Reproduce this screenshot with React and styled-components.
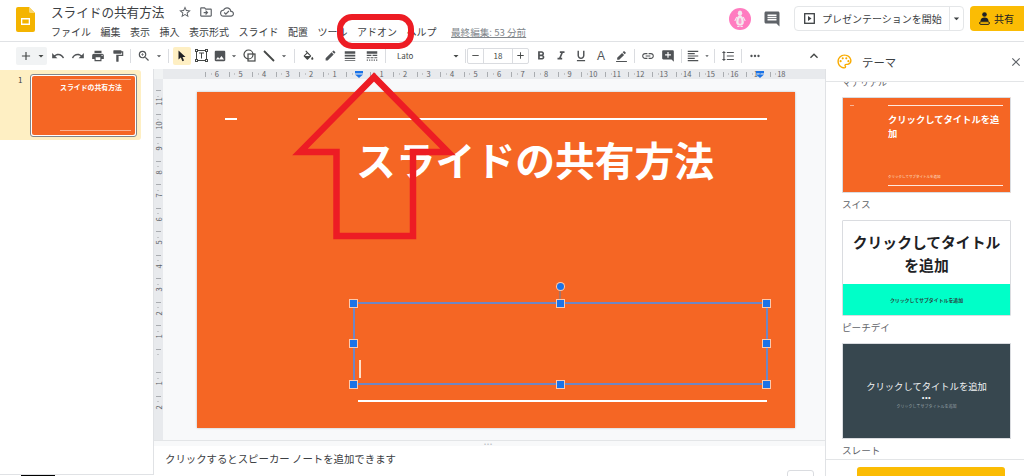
import React from 'react';
import styled, { createGlobalStyle } from 'styled-components';
import {
  MdAdd, MdArrowDropDown, MdUndo, MdRedo, MdPrint, MdFormatPaint, MdZoomIn, MdImage,
  MdCreate, MdLineWeight, MdLineStyle, MdRemove, MdFormatBold, MdFormatItalic,
  MdFormatUnderlined, MdBorderColor, MdLink, MdAddComment, MdFormatAlignLeft,
  MdFormatLineSpacing, MdMoreHoriz, MdExpandLess, MdClose, MdStarBorder, MdOutlineDriveFileMove,
  MdOutlineCloudDone, MdComment, MdOutlinePalette,
} from 'react-icons/md';

const Global = createGlobalStyle`
  html, body { margin: 0; padding: 0; background: #fff; overflow: hidden; }
  body { font-family: "Noto Sans CJK JP", "Noto Sans", sans-serif; color: #3c4043; }
  * { box-sizing: border-box; }
`;

const Page = styled.div`
  position: relative;
  width: 1024px;
  height: 476px;
  overflow: hidden;
  display: flex;
  flex-direction: column;
`;

/* header */
const Header = styled.header`
  height: 42px;
  flex: none;
  display: flex;
  align-items: flex-start;
  padding: 7px 0 0 16px;
  border-bottom: 1px solid #e0e2e5;
`;
const Logo = styled.svg`
  width: 19px;
  height: 25px;
  flex: none;
`;
const TitleBlock = styled.div`
  margin: -5px 0 0 16px;
  display: flex;
  flex-direction: column;
  flex: 1;
`;
const TitleRow = styled.div`
  display: flex;
  align-items: center;
  height: 19px;
  gap: 7px;
  color: #5f6368;
`;
const DocTitle = styled.span`
  font-size: 12.6px;
  color: #3c4043;
  margin-right: 7px;
  white-space: nowrap;
`;
const MenuRow = styled.nav`
  display: flex;
  align-items: center;
  gap: 9.5px;
  height: 19px;
  margin-top: 1px;
`;
const MenuItem = styled.span`
  font-size: 10px;
  color: #3c4043;
  white-space: nowrap;
`;
const LastEdit = styled.span`
  font-size: 9.6px;
  color: #80868b;
  text-decoration: underline;
  margin-left: 5px;
  white-space: nowrap;
`;
const HeaderRight = styled.div`
  display: flex;
  align-items: center;
  height: 25px;
  margin-top: -1px;
`;
const Avatar = styled.div`
  width: 22px;
  height: 22px;
  border-radius: 50%;
  background: #ff7cc0;
  display: flex;
  align-items: center;
  justify-content: center;
  margin-right: 12px;
`;
const CommentIcon = styled(MdComment)`
  font-size: 18px;
  color: #5f6368;
  margin-right: 13px;
`;
const PresentButton = styled.div`
  width: 170px;
  height: 25px;
  border: 1px solid #e4e6e8;
  border-radius: 4px;
  display: flex;
  align-items: center;
  font-size: 10px;
  color: #3c4043;
  margin-right: 6px;
`;
const PresentLabel = styled.div`
  flex: 1;
  height: 100%;
  display: flex;
  align-items: center;
  gap: 7px;
  padding-left: 9px;
  border-right: 1px solid #e4e6e8;
  white-space: nowrap;
`;
const PresentCaret = styled.div`
  width: 13px;
  display: flex;
  justify-content: center;
  color: #3c4043;
  font-size: 13px;
`;
const ShareButton = styled.div`
  width: 54px;
  height: 25px;
  background: #fbbc04;
  border-radius: 4px 0 0 4px;
  display: flex;
  align-items: center;
  gap: 4px;
  padding-left: 9px;
  font-size: 10px;
  color: #202124;
`;

/* toolbar */
const Toolbar = styled.div`
  height: 27px;
  flex: none;
  display: flex;
  align-items: center;
  padding-left: 16px;
  color: #444746;
`;
const Tool = styled.div`
  width: ${(p) => p.$w || 20}px;
  height: 18px;
  flex: none;
  display: flex;
  align-items: center;
  justify-content: center;
  font-size: ${(p) => p.$s || 14}px;
  background: ${(p) => p.$bg || 'transparent'};
  border-radius: 2px;
  color: #505356;
`;
const TextColorA = styled(Tool)`
  font-family: "Liberation Sans", sans-serif;
  font-size: 12px;
  line-height: 18px;
`;
const AddGroup = styled.div`
  width: 31px;
  height: 18px;
  display: flex;
  align-items: center;
  background: #f1f3f4;
  border-radius: 2px;
  padding-left: 3px;
  margin-right: 1px;
  font-size: 14px;
`;
const Sep = styled.div`
  width: 1px;
  height: 14px;
  flex: none;
  background: #dadce0;
  margin: 0 ${(p) => p.$r ?? 3}px 0 ${(p) => p.$l ?? 3}px;
`;
const FontName = styled.div`
  width: 72px;
  flex: none;
  display: flex;
  align-items: center;
  justify-content: space-between;
  font-size: 8px;
  padding-left: 7px;
  color: #444746;
`;
const SizeBox = styled.div`
  display: flex;
  height: 16px;
  border: 1px solid #dadce0;
  border-radius: 2px;
  margin-right: 2px;
`;
const SizeBtn = styled.div`
  width: 15px;
  display: flex;
  align-items: center;
  justify-content: center;
  font-size: 11px;
`;
const SizeVal = styled.div`
  width: 30px;
  display: flex;
  align-items: center;
  justify-content: center;
  font-size: 8px;
  border-left: 1px solid #dadce0;
  border-right: 1px solid #dadce0;
`;
const Push = styled.div`
  margin-left: auto;
  margin-right: 202px;
  font-size: 16px;
  display: flex;
  color: #444746;
`;

/* body */
const Body = styled.div`
  flex: 1;
  min-height: 0;
  display: flex;
`;
const FilmStrip = styled.aside`
  width: 154px;
  flex: none;
  border-right: 1px solid #e0e2e5;
  border-bottom: 1px solid #e0e2e5;
  height: 406px;
  padding-top: 1px;
`;
const FilmRow = styled.div`
  width: 141px;
  height: 70px;
  background: #feefc3;
  border-radius: 0 3px 3px 0;
  display: flex;
  padding: 4px 0 0 18px;
`;
const FilmNum = styled.span`
  font-size: 8px;
  width: 12px;
  color: #3c4043;
  line-height: 11px;
`;
const Thumb = styled.div`
  width: 107px;
  height: 63px;
  border: 1px solid #80868b;
  border-radius: 3px;
  background: #fff;
  padding: 1px;
`;
const ThumbInner = styled.div`
  height: 100%;
  background: #f56624;
  border-radius: 2px;
  position: relative;
  display: flex;
  flex-direction: column;
  padding: 3px 4px 4px 28px;
  justify-content: space-between;
`;
const ThumbLine = styled.div`
  height: 1px;
  background: #fbb08f;
`;
const ThumbTitle = styled.div`
  font-size: 6.9px;
  line-height: 9px;
  font-weight: 700;
  color: #fff;
  white-space: nowrap;
  margin-bottom: auto;
  margin-top: 3px;
`;

const Center = styled.main`
  flex: 1;
  min-width: 0;
  display: flex;
  flex-direction: column;
  border-right: 1px solid #e0e2e5;
`;
const HRulerRow = styled.div`
  height: 10px;
  flex: none;
  display: flex;
`;
const Corner = styled.div`
  width: 9px;
  background: #f1f3f4;
`;
const HRuler = styled.div`
  flex: 1;
  position: relative;
  background: #e8eaed;
  display: flex;
  padding-left: 42.2px;
`;
const ticks = `
  background-image:
    linear-gradient(#a9acb0, #a9acb0),
    linear-gradient(#c4c6c9, #c4c6c9);
  background-repeat: no-repeat;
`;
const HCell = styled.div`
  width: 23.53px;
  flex: none;
  font-size: 7.5px;
  line-height: 10px;
  text-align: center;
  color: #5f6368;
  ${ticks}
  background-size: 1px 5px, 1px 2px;
  background-position: 0 3px, 25% 4px;
`;
const RulerMarker = styled.svg`
  position: absolute;
  top: 2px;
  width: 8px;
  height: 7px;
  left: ${(p) => p.$x}px;
`;
const Work = styled.div`
  flex: 1;
  min-height: 0;
  display: flex;
  background: #f8f9fa;
`;
const VRuler = styled.div`
  width: 9px;
  flex: none;
  background: #e8eaed;
  padding-top: 11px;
`;
const VCell = styled.div`
  height: 23.53px;
  font-size: 7.5px;
  color: #5f6368;
  display: flex;
  align-items: center;
  justify-content: center;
  ${ticks}
  background-size: 5px 1px, 2px 1px;
  background-position: 2px 0, 3px 25%;
`;
const VLabel = styled.span`
  transform: rotate(-90deg);
  line-height: 9px;
`;
const SlideArea = styled.div`
  flex: 1;
  padding: 13px 0 0 34px;
`;
const Slide = styled.div`
  position: relative;
  width: 598px;
  height: 336px;
  background: #f56624;
  box-shadow: 0 0 2px #b9bbbe;
`;
const SlideLine = styled.div`
  position: absolute;
  left: ${(p) => p.$x}px;
  top: ${(p) => p.$y}px;
  width: ${(p) => p.$w}px;
  height: 2px;
  background: #fff;
`;
const SlideTitle = styled.div`
  position: absolute;
  left: 159px;
  top: 37px;
  font-size: 39.8px;
  line-height: 60px;
  font-weight: 700;
  color: #fff;
  white-space: nowrap;
`;
const SelectBox = styled.div`
  position: absolute;
  left: 156.5px;
  top: 211.3px;
  width: 413px;
  height: 81px;
  box-shadow: 0 0 0 1px #6f86c4, inset 0 0 0 1px #6f86c4;
`;
const Handle = styled.div`
  position: absolute;
  left: ${(p) => p.$x}%;
  top: ${(p) => p.$y}%;
  width: 7px;
  height: 7px;
  margin: -3.5px 0 0 -3.5px;
  background: #1a73e8;
  box-shadow: 0 0 0 1px #fbc9ae;
`;
const Stem = styled.div`
  position: absolute;
  left: 50%;
  top: -16px;
  height: 16px;
  width: 2px;
  margin-left: -1px;
  background: #a5746a;
`;
const RotateHandle = styled(Handle)`
  left: 50%;
  top: -16.5px;
  border-radius: 50%;
`;
const Caret = styled.div`
  position: absolute;
  left: 5.5px;
  top: 57px;
  width: 1.5px;
  height: 18px;
  background: #ffe0c8;
`;
const Notes = styled.div`
  height: 36px;
  flex: none;
  position: relative;
  background: #fff;
  border-top: 1px solid #e3e5e7;
  margin-top: 0;
  padding: 11px 0 0 11px;
  font-size: 10.4px;
  line-height: 14px;
  color: #3c4043;
  box-shadow: inset 0 5px 0 #f8f9fa;
`;
const Grip = styled.div`
  position: absolute;
  left: 330px;
  top: 1px;
  font-size: 6px;
  line-height: 3px;
  letter-spacing: 1px;
  color: #bdc1c6;
`;
const NotesBtn = styled.div`
  position: absolute;
  right: 11px;
  top: 29px;
  width: 27px;
  height: 12px;
  border: 1px solid #dadce0;
  border-radius: 3px;
`;
const BlackBar = styled.div`
  position: absolute;
  left: 21px;
  top: 475px;
  width: 34px;
  height: 1px;
  background: #000;
`;

/* side panel */
const Panel = styled.aside`
  width: 198px;
  flex: none;
  margin-top: -27px;
  height: 434px;
  background: #fff;
  display: flex;
  flex-direction: column;
  position: relative;
`;
const PanelHead = styled.div`
  height: 40px;
  flex: none;
  display: flex;
  align-items: center;
  padding: 0 1px 0 10px;
  border-bottom: 1px solid #e3e5e7;
  font-size: 11.4px;
  color: #3c4043;
  gap: 9px;
`;
const PanelClose = styled(MdClose)`
  margin-left: auto;
  font-size: 14px;
  color: #5f6368;
`;
const PanelScroll = styled.div`
  flex: 1;
  min-height: 0;
  overflow: hidden;
  padding-left: 16px;
  border-bottom: 1px solid #e3e5e7;
`;
const GroupLabel = styled.div`
  font-size: 9px;
  line-height: 12px;
  height: 12px;
  margin: -5px 0 8px;
  color: #5f6368;
`;
const ThemeCard = styled.div`
  width: 169px;
  height: 96px;
  border: 1px solid #dadce0;
  border-radius: 1px;
  position: relative;
  overflow: hidden;
  background: ${(p) => p.$bg};
`;
const ThemeName = styled.div`
  font-size: 9.6px;
  line-height: 14px;
  height: 14px;
  margin: 4px 0 ${(p) => p.$mb ?? 9}px;
  color: #5f6368;
`;
const MiniLine = styled.div`
  position: absolute;
  left: ${(p) => p.$x}px;
  top: ${(p) => p.$y}px;
  width: ${(p) => p.$w}px;
  height: 1px;
  background: #fff;
  opacity: ${(p) => p.$o ?? 0.85};
`;
const SwissTitle = styled.div`
  position: absolute;
  left: 45px;
  top: 14px;
  width: 116px;
  font-size: 9.3px;
  line-height: 14px;
  font-weight: 700;
  color: #fff;
`;
const SwissSub = styled.div`
  position: absolute;
  left: 45px;
  top: 76px;
  font-size: 3.5px;
  line-height: 5px;
  color: #fde3d5;
  white-space: nowrap;
`;
const PeachWrap = styled.div`
  height: 100%;
  display: flex;
  flex-direction: column;
`;
const PeachTop = styled.div`
  height: 63px;
  flex: none;
  display: flex;
  align-items: center;
  justify-content: center;
  text-align: center;
  font-size: 14.8px;
  line-height: 23px;
  font-weight: 700;
  color: #202124;
`;
const PeachBottom = styled.div`
  flex: 1;
  background: #00ffc8;
  display: flex;
  align-items: center;
  justify-content: center;
  font-size: 4.9px;
  font-weight: 700;
  color: #28443f;
`;
const SlateWrap = styled.div`
  height: 100%;
  display: flex;
  flex-direction: column;
  align-items: center;
  padding-top: 35px;
  color: #f1f3f4;
`;
const SlateTitle = styled.div`
  font-size: 9.3px;
  line-height: 14px;
`;
const SlateDots = styled.div`
  font-size: 7px;
  line-height: 6px;
  letter-spacing: 0.5px;
  font-weight: 700;
  margin-top: 1px;
`;
const SlateSub = styled.div`
  font-size: 4px;
  line-height: 6px;
  margin-top: 3px;
  color: #9aa6ab;
`;
const PanelFoot = styled.div`
  height: 16px;
  flex: none;
  padding: 7px 0 0 31px;
`;
const ImportBtn = styled.div`
  width: 148px;
  height: 20px;
  background: #fbbc04;
  border-radius: 3px;
`;

/* annotation overlay */
const ArrowMark = styled.svg`
  position: absolute;
  left: 0;
  top: 0;
  width: 1024px;
  height: 476px;
  pointer-events: none;
`;
const RedRing = styled.div`
  position: absolute;
  left: 337px;
  top: 14px;
  width: 77px;
  height: 35px;
  border: 6px solid #ed1c24;
  border-radius: 15px;
`;

const menu = ['ファイル', '編集', '表示', '挿入', '表示形式', 'スライド', '配置', 'ツール', 'アドオン', 'ヘルプ'];
const hLabels = [6, 5, 4, 3, 2, 1, '', 1, 2, 3, 4, 5, 6, 7, 8, 9, 10, 11, 12, 13, 14, 15, 16, 17, 18];
const vLabels = [11, 10, 9, 8, 7, 6, 5, 4, 3, 2, 1, '', 1, 2];
const handles = [[0, 0], [50, 0], [100, 0], [0, 50], [100, 50], [0, 100], [50, 100], [100, 100]];

const Marker = ({ x }) => (
  <RulerMarker $x={x} viewBox="0 0 8 7">
    <rect x="0" y="0" width="8" height="2.4" fill="#1a73e8" />
    <path d="M0 3.4h8L4 7z" fill="#1a73e8" />
  </RulerMarker>
);

export default function App() {
  return (
    <Page>
      <Global />
      <Header>
        <Logo viewBox="0 0 19 25">
          <path d="M2 0h11l6 6v17a2 2 0 0 1-2 2H2a2 2 0 0 1-2-2V2a2 2 0 0 1 2-2z" fill="#f4b400" />
          <path d="M13 0l6 6h-4.500a1.500 1.500 0 0 1-1.500-1.500z" fill="#f9d76f" />
          <path d="M5 11h9v7H5z" fill="#fff" />
          <path d="M6.300 12.500h6.400v4H6.300z" fill="#f4b400" />
        </Logo>
        <TitleBlock>
          <TitleRow>
            <DocTitle>スライドの共有方法</DocTitle>
            <MdStarBorder size={14} />
            <MdOutlineDriveFileMove size={14} />
            <MdOutlineCloudDone size={14} />
          </TitleRow>
          <MenuRow>
            {menu.map((m) => <MenuItem key={m}>{m}</MenuItem>)}
            <LastEdit>最終編集: 53 分前</LastEdit>
          </MenuRow>
        </TitleBlock>
        <HeaderRight>
          <Avatar>
            <svg width="12" height="18" viewBox="0 0 12 18">
              <ellipse cx="6" cy="3.200" rx="2.200" ry="2.600" fill="#f4e9ee" />
              <path d="M6 5.200c2.600 0 3.800 3.800 3.800 7.300 0 2-1.400 3-3.800 3s-3.800-1-3.800-3C2.200 9 3.400 5.200 6 5.200z" fill="#f4e9ee" />
              <path d="M2.800 7L.800 11M9.200 7l2 4" stroke="#f4e9ee" strokeWidth="1.100" />
              <path d="M3.500 15.800h2v1.200h-2.500zM6.500 15.800h2l.5 1.200H6.500z" fill="#f4e9ee" />
              <path d="M6 8c1 0 1.500 1.800 1.500 4 0 1.300-.5 1.800-1.500 1.800s-1.500-.5-1.500-1.800c0-2.200.5-4 1.500-4z" fill="#ff9ccf" />
            </svg>
          </Avatar>
          <CommentIcon />
          <PresentButton>
            <PresentLabel>
              <svg width="11" height="11" viewBox="0 0 11 11">
                <rect x="0.700" y="0.700" width="9.600" height="9.600" fill="none" stroke="#3c4043" strokeWidth="1.300" />
                <path d="M4 3l3.500 2.500L4 8z" fill="#3c4043" />
              </svg>
              プレゼンテーションを開始
            </PresentLabel>
            <PresentCaret><MdArrowDropDown /></PresentCaret>
          </PresentButton>
          <ShareButton>
            <svg width="11" height="13" viewBox="0 0 11 13">
              <circle cx="5.500" cy="2.500" r="2.300" fill="#202124" />
              <path d="M1.500 9c0-2.500 1.800-3.500 4-3.500s4 1 4 3.500z" fill="#202124" />
              <rect x="0.600" y="9.700" width="9.800" height="2.700" rx="1.350" fill="none" stroke="#202124" strokeWidth="1" />
            </svg>
            共有
          </ShareButton>
        </HeaderRight>
      </Header>

      <Toolbar>
        <AddGroup><MdAdd /><MdArrowDropDown style={{ fontSize: 12, marginLeft: 2 }} /></AddGroup>
        <Tool><MdUndo /></Tool>
        <Tool><MdRedo /></Tool>
        <Tool><MdPrint /></Tool>
        <Tool $w={19}><MdFormatPaint /></Tool>
        <Sep />
        <Tool><MdZoomIn /></Tool>
        <Tool $w={10} $s={12}><MdArrowDropDown /></Tool>
        <Sep $l={4} $r={4} />
        <Tool $w={18} $bg="#feefc3">
          <svg width="9" height="12" viewBox="0 0 9 12"><path d="M0.500 0.500v9l2.300-2 1.600 3.800 1.700-.8-1.600-3.500h3z" fill="#202124" /></svg>
        </Tool>
        <Tool>
          <svg width="13" height="13" viewBox="0 0 13 13" fill="none" stroke="#444746">
            <rect x="1.500" y="1.500" width="10" height="10" />
            <path d="M4 4h5M6.500 4v5.500" />
            <rect x="0.500" y="0.500" width="2" height="2" fill="#fff" /><rect x="10.500" y="0.500" width="2" height="2" fill="#fff" />
            <rect x="0.500" y="10.500" width="2" height="2" fill="#fff" /><rect x="10.500" y="10.500" width="2" height="2" fill="#fff" />
          </svg>
        </Tool>
        <Tool $w={18}><MdImage /></Tool>
        <Tool $w={10} $s={12}><MdArrowDropDown /></Tool>
        <Tool>
          <svg width="13" height="13" viewBox="0 0 13 13" fill="none" stroke="#444746" strokeWidth="1.200">
            <circle cx="5.500" cy="5.500" r="4.500" />
            <rect x="5" y="5" width="7" height="7" />
          </svg>
        </Tool>
        <Tool>
          <svg width="12" height="12" viewBox="0 0 12 12"><path d="M1 1l10 10" stroke="#444746" strokeWidth="1.800" /></svg>
        </Tool>
        <Tool $w={10} $s={12}><MdArrowDropDown /></Tool>
        <Sep $l={5} $r={3} />
        <Tool>
          <svg width="13" height="12" viewBox="0 0 24 20" fill="#444746">
            <path d="M16.560 8.940L7.620 0 6.210 1.410l2.380 2.380-5.150 5.150c-.59.590-.59 1.540 0 2.120l5.500 5.500c.29.290.68.440 1.060.440s.77-.15 1.060-.44l5.500-5.500c.59-.58.59-1.530 0-2.120zM5.210 10L10 5.210 14.790 10H5.210zM19 11.500s-2 2.170-2 3.500c0 1.100.9 2 2 2s2-.9 2-2c0-1.330-2-3.500-2-3.500z" />
          </svg>
        </Tool>
        <Tool $s={13} style={{ marginLeft: 2 }}><MdCreate /></Tool>
        <Tool><MdLineWeight /></Tool>
        <Tool $w={23}><MdLineStyle /></Tool>
        <Sep $l={2} $r={4} />
        <FontName>Lato<MdArrowDropDown size={12} /></FontName>
        <Sep $l={3} $r={1} />
        <SizeBox>
          <SizeBtn><MdRemove /></SizeBtn>
          <SizeVal>18</SizeVal>
          <SizeBtn><MdAdd /></SizeBtn>
        </SizeBox>
        <Tool><MdFormatBold /></Tool>
        <Tool><MdFormatItalic /></Tool>
        <Tool><MdFormatUnderlined /></Tool>
        <TextColorA>A</TextColorA>
        <Tool $s={13}><MdBorderColor viewBox="0 0 24 20" /></Tool>
        <Sep $l={3} $r={3} />
        <Tool><MdLink /></Tool>
        <Tool><MdAddComment /></Tool>
        <Sep $l={3} $r={1} />
        <Tool><MdFormatAlignLeft /></Tool>
        <Tool $w={8} $s={12}><MdArrowDropDown /></Tool>
        <Sep $l={3} $r={3} />
        <Tool><MdFormatLineSpacing /></Tool>
        <Sep $l={3} $r={3} />
        <Tool><MdMoreHoriz /></Tool>
        <Push><MdExpandLess /></Push>
      </Toolbar>

      <Body>
        <FilmStrip>
          <FilmRow>
            <FilmNum>1</FilmNum>
            <Thumb>
              <ThumbInner>
                <ThumbLine />
                <ThumbTitle>スライドの共有方法</ThumbTitle>
                <ThumbLine />
              </ThumbInner>
            </Thumb>
          </FilmRow>
        </FilmStrip>
        <Center>
          <HRulerRow>
            <Corner />
            <HRuler>
              {hLabels.map((l, i) => <HCell key={i}>{l}</HCell>)}
              <Marker x={192} />
              <Marker x={593} />
            </HRuler>
          </HRulerRow>
          <Work>
            <VRuler>
              {vLabels.map((l, i) => <VCell key={i}><VLabel>{l}</VLabel></VCell>)}
            </VRuler>
            <SlideArea>
              <Slide>
                <SlideLine $x={28} $y={26} $w={12} />
                <SlideLine $x={161} $y={26} $w={409} />
                <SlideTitle>スライドの共有方法</SlideTitle>
                <SelectBox>
                  <Stem />
                  <RotateHandle />
                  {handles.map(([x, y]) => <Handle key={`${x}-${y}`} $x={x} $y={y} />)}
                  <Caret />
                </SelectBox>
                <SlideLine $x={161} $y={308} $w={409} />
              </Slide>
            </SlideArea>
          </Work>
          <Notes>
            <Grip>•••</Grip>
            クリックするとスピーカー ノートを追加できます
            <NotesBtn />
          </Notes>
        </Center>
        <Panel>
          <PanelHead>
            <MdOutlinePalette size={17} color="#f9ab00" />
            テーマ
            <PanelClose />
          </PanelHead>
          <PanelScroll>
            <GroupLabel>マテリアル</GroupLabel>
            <ThemeCard $bg="#f56624">
              <MiniLine $x={7} $y={7} $w={4} $o={0.5} />
              <MiniLine $x={45} $y={7} $w={115} />
              <SwissTitle>クリックしてタイトルを追加</SwissTitle>
              <SwissSub>クリックしてサブタイトルを追加</SwissSub>
              <MiniLine $x={45} $y={87} $w={115} />
            </ThemeCard>
            <ThemeName>スイス</ThemeName>
            <ThemeCard $bg="#fff">
              <PeachWrap>
                <PeachTop>クリックしてタイトル<br />を追加</PeachTop>
                <PeachBottom>クリックしてサブタイトルを追加</PeachBottom>
              </PeachWrap>
            </ThemeCard>
            <ThemeName>ピーチデイ</ThemeName>
            <ThemeCard $bg="#37474f">
              <SlateWrap>
                <SlateTitle>クリックしてタイトルを追加</SlateTitle>
                <SlateDots>•••</SlateDots>
                <SlateSub>クリックしてサブタイトルを追加</SlateSub>
              </SlateWrap>
            </ThemeCard>
            <ThemeName $mb={0}>スレート</ThemeName>
          </PanelScroll>
          <PanelFoot><ImportBtn /></PanelFoot>
        </Panel>
      </Body>

      <BlackBar />
      <ArrowMark viewBox="0 0 1024 476">
        <path d="M374 77L300 152H336.500V236H413V152H448Z" fill="none" stroke="#ed1c24" strokeWidth="6.500" />
      </ArrowMark>
      <RedRing />
    </Page>
  );
}
